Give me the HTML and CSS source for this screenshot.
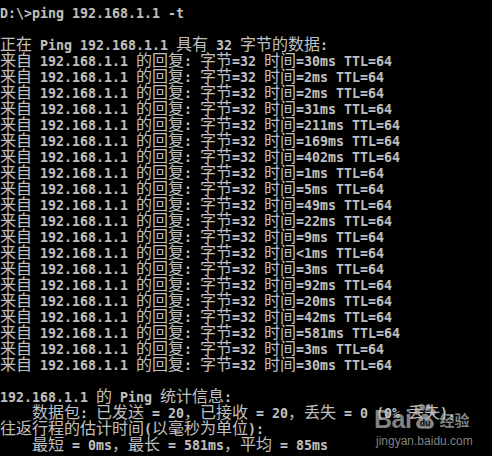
FILE: index.html
```html
<!DOCTYPE html>
<html lang="zh-CN">
<head>
    <meta charset="UTF-8">
    <title>ping 192.168.1.1 -t</title>
    <link rel="stylesheet" href="styles.css">
</head>
<body>

<div class="console">
<pre class="output">D:\&gt;ping 192.168.1.1 -t

<span class="cn">正在</span> Ping 192.168.1.1 <span class="cn">具有</span> 32 <span class="cn">字节的数据</span>:
<span class="cn">来自</span> 192.168.1.1 <span class="cn">的回复</span>: <span class="cn">字节</span>=32 <span class="cn">时间</span>=30ms TTL=64
<span class="cn">来自</span> 192.168.1.1 <span class="cn">的回复</span>: <span class="cn">字节</span>=32 <span class="cn">时间</span>=2ms TTL=64
<span class="cn">来自</span> 192.168.1.1 <span class="cn">的回复</span>: <span class="cn">字节</span>=32 <span class="cn">时间</span>=2ms TTL=64
<span class="cn">来自</span> 192.168.1.1 <span class="cn">的回复</span>: <span class="cn">字节</span>=32 <span class="cn">时间</span>=31ms TTL=64
<span class="cn">来自</span> 192.168.1.1 <span class="cn">的回复</span>: <span class="cn">字节</span>=32 <span class="cn">时间</span>=211ms TTL=64
<span class="cn">来自</span> 192.168.1.1 <span class="cn">的回复</span>: <span class="cn">字节</span>=32 <span class="cn">时间</span>=169ms TTL=64
<span class="cn">来自</span> 192.168.1.1 <span class="cn">的回复</span>: <span class="cn">字节</span>=32 <span class="cn">时间</span>=402ms TTL=64
<span class="cn">来自</span> 192.168.1.1 <span class="cn">的回复</span>: <span class="cn">字节</span>=32 <span class="cn">时间</span>=1ms TTL=64
<span class="cn">来自</span> 192.168.1.1 <span class="cn">的回复</span>: <span class="cn">字节</span>=32 <span class="cn">时间</span>=5ms TTL=64
<span class="cn">来自</span> 192.168.1.1 <span class="cn">的回复</span>: <span class="cn">字节</span>=32 <span class="cn">时间</span>=49ms TTL=64
<span class="cn">来自</span> 192.168.1.1 <span class="cn">的回复</span>: <span class="cn">字节</span>=32 <span class="cn">时间</span>=22ms TTL=64
<span class="cn">来自</span> 192.168.1.1 <span class="cn">的回复</span>: <span class="cn">字节</span>=32 <span class="cn">时间</span>=9ms TTL=64
<span class="cn">来自</span> 192.168.1.1 <span class="cn">的回复</span>: <span class="cn">字节</span>=32 <span class="cn">时间</span>&lt;1ms TTL=64
<span class="cn">来自</span> 192.168.1.1 <span class="cn">的回复</span>: <span class="cn">字节</span>=32 <span class="cn">时间</span>=3ms TTL=64
<span class="cn">来自</span> 192.168.1.1 <span class="cn">的回复</span>: <span class="cn">字节</span>=32 <span class="cn">时间</span>=92ms TTL=64
<span class="cn">来自</span> 192.168.1.1 <span class="cn">的回复</span>: <span class="cn">字节</span>=32 <span class="cn">时间</span>=20ms TTL=64
<span class="cn">来自</span> 192.168.1.1 <span class="cn">的回复</span>: <span class="cn">字节</span>=32 <span class="cn">时间</span>=42ms TTL=64
<span class="cn">来自</span> 192.168.1.1 <span class="cn">的回复</span>: <span class="cn">字节</span>=32 <span class="cn">时间</span>=581ms TTL=64
<span class="cn">来自</span> 192.168.1.1 <span class="cn">的回复</span>: <span class="cn">字节</span>=32 <span class="cn">时间</span>=3ms TTL=64
<span class="cn">来自</span> 192.168.1.1 <span class="cn">的回复</span>: <span class="cn">字节</span>=32 <span class="cn">时间</span>=30ms TTL=64

192.168.1.1 <span class="cn">的</span> Ping <span class="cn">统计信息</span>:
    <span class="cn">数据包</span>: <span class="cn">已发送</span> = 20<span class="cn">，已接收</span> = 20<span class="cn">，丢失</span> = 0 (0% <span class="cn">丢失</span>)<span class="cn">，</span>
<span class="cn">往返行程的估计时间</span>(<span class="cn">以毫秒为单位</span>):
    <span class="cn">最短</span> = 0ms<span class="cn">，最长</span> = 581ms<span class="cn">，平均</span> = 85ms</pre>

    <div class="watermark">
        <div class="wm-logo">
            <span class="wm-bai">Bai</span>
            <svg class="wm-paw" width="26" height="26" viewBox="0 0 24 24">
                <ellipse cx="5" cy="7" rx="2.6" ry="3.2"/>
                <ellipse cx="9.5" cy="3.2" rx="2.5" ry="3"/>
                <ellipse cx="15" cy="3.2" rx="2.5" ry="3"/>
                <ellipse cx="19.3" cy="7.5" rx="2.5" ry="3"/>
                <path d="M12 9 C9 9 8 12 6 14 C3.5 16.5 3 19 5 21.5 C7 23.5 10 22.5 12 22.5 C14 22.5 17 23.5 19 21.5 C21 19 20.5 16.5 18 14 C16 12 15 9 12 9 Z"/>
                <text x="12" y="20.5" class="wm-du">du</text>
            </svg>
            <span class="wm-jy">经验</span>
        </div>
        <div class="wm-url">jingyan.baidu.com</div>
    </div>
</div>

</body>
</html>
```

FILE: styles.css
```css
html, body {
    margin: 0;
    padding: 0;
    background: #000;
}

.console {
    position: relative;
    width: 492px;
    height: 456px;
    overflow: hidden;
    background: #000;
}

.output {
    margin: 0;
    padding: 6px 0 0 0;
    font-family: "DejaVu Sans Mono", "Liberation Mono", monospace;
    font-size: 13.29px;
    font-weight: bold;
    line-height: 16px;
    color: #c0c0c0;
    white-space: pre;
}

/* chinese glyphs are double width: 16px cells; line-height 0 keeps rows at 16px */
.cn {
    font-family: "Noto Sans CJK SC", sans-serif;
    font-size: 16px;
    font-weight: normal;
    line-height: 0;
}

/* baidu jingyan watermark */
.watermark {
    position: absolute;
    left: 374px;
    top: 405px;
    color: rgba(190, 190, 190, 0.7);
}
.wm-logo {
    display: flex;
    align-items: center;
    height: 28px;
}
.wm-bai {
    font-family: "Liberation Sans", Arial, sans-serif;
    font-weight: bold;
    font-size: 25px;
    letter-spacing: -0.5px;
}
.wm-paw {
    fill: rgba(190, 190, 190, 0.7);
    margin: -5px 0 0 1px;
}
.wm-du {
    font-family: "Liberation Sans", Arial, sans-serif;
    font-weight: bold;
    font-size: 8px;
    fill: #000;
    text-anchor: middle;
}
.wm-jy {
    font-family: "Noto Sans CJK SC", sans-serif;
    font-weight: bold;
    font-size: 15px;
    margin-left: 1px;
}
.wm-url {
    font-family: "Liberation Sans", Arial, sans-serif;
    font-size: 12px;
    margin-top: 1px;
    margin-left: 2px;
}
```
